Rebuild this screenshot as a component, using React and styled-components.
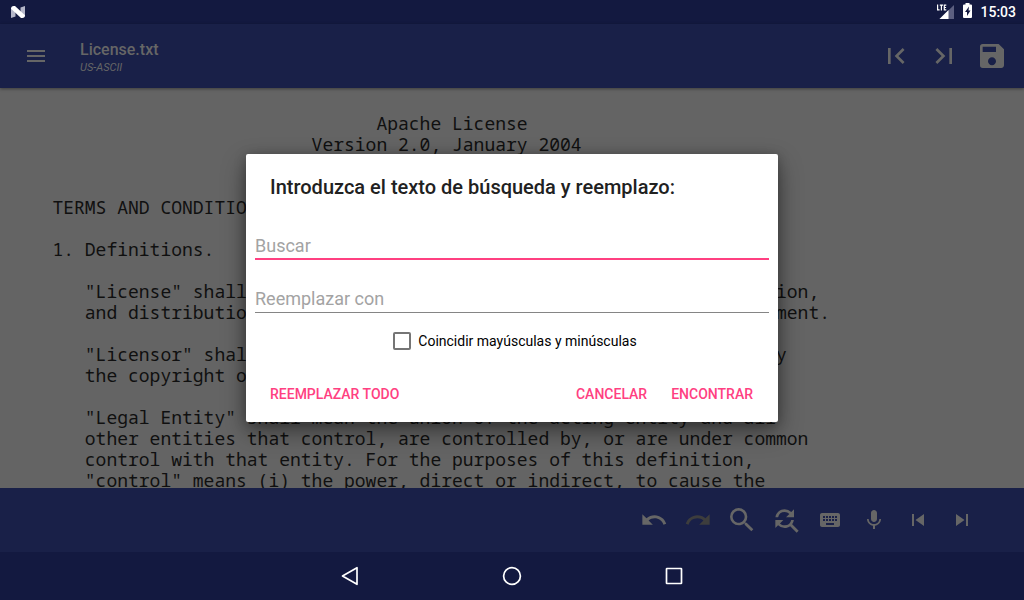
import React from 'react';
import styled, { createGlobalStyle } from 'styled-components';
import {
  MdMenu, MdFirstPage, MdLastPage, MdSave, MdUndo, MdRedo, MdSearch,
  MdFindReplace, MdKeyboard, MdMic, MdSkipPrevious, MdSkipNext,
} from 'react-icons/md';

const GlobalStyle = createGlobalStyle`
  * { box-sizing: border-box; }
  body { margin: 0; font-family: Roboto, "Liberation Sans", sans-serif; }
  button { font-family: inherit; border: 0; padding: 0; background: none; cursor: pointer; }
`;

const Screen = styled.div`
  display: flex;
  flex-direction: column;
  height: 100vh;
  overflow: hidden;
`;

const StatusBar = styled.header`
  display: flex;
  flex: none;
  align-items: center;
  justify-content: space-between;
  height: 24px;
  padding: 0 8px 0 10px;
  background: #131940;
  color: #fff;
  svg { display: block; }
`;

const StatusIcons = styled.div`
  display: flex;
  align-items: center;
  gap: 8px;
`;

const Clock = styled.time`
  font-size: 14px;
  font-weight: 500;
  line-height: 24px;
`;

const AppArea = styled.div`
  position: relative;
  display: flex;
  flex: 1;
  flex-direction: column;
  min-height: 0;
`;

const Toolbar = styled.div`
  display: flex;
  flex: none;
  align-items: center;
  height: 64px;
  padding: 0 8px 0 12px;
  background: #192048;
  box-shadow: 0 1px 3px rgba(0, 0, 0, 0.4);
  z-index: 1;
`;

const FileInfo = styled.div`
  flex: 1;
  padding: 3px 0 0 20px;
`;

const FileName = styled.h1`
  margin: 0;
  color: #666;
  font-size: 16px;
  font-weight: 500;
  line-height: 20px;
`;

const Encoding = styled.p`
  margin: 0;
  color: #666;
  font-size: 11px;
  font-style: italic;
  line-height: 16px;
`;

const IconButton = styled.button`
  display: flex;
  align-items: center;
  justify-content: center;
  width: ${(p) => p.$width || 48}px;
  height: 48px;
  color: ${(p) => (p.$dim ? '#3d3d3d' : '#666')};
`;

const Editor = styled.main`
  flex: 1;
  min-height: 0;
  overflow: hidden;
  padding: 25px 20px 0;
  background: #646464;
`;

const FileText = styled.pre`
  margin: 0;
  color: #101010;
  font-family: "Droid Sans Mono", "Noto Sans Mono", "DejaVu Sans Mono", monospace;
  font-size: 18px;
  line-height: 21px;
`;

const BottomBar = styled.div`
  display: flex;
  flex: none;
  align-items: center;
  justify-content: flex-end;
  height: 64px;
  padding-right: 40px;
  background: #192048;
`;

const NavBar = styled.nav`
  display: flex;
  flex: none;
  align-items: center;
  justify-content: center;
  gap: 114px;
  height: 48px;
  background: #131940;
`;

const NavButton = styled.button`
  width: 48px;
  height: 48px;
  svg { display: block; margin: auto; }
`;

const Overlay = styled.div`
  position: absolute;
  inset: 0;
  z-index: 2;
  display: flex;
  align-items: center;
  justify-content: center;
`;

const Dialog = styled.form`
  width: 532px;
  max-width: 90%;
  padding: 20px 9px 4px;
  border-radius: 2px;
  background: #fff;
  box-shadow: 0 10px 24px rgba(0, 0, 0, 0.4), 0 2px 12px rgba(0, 0, 0, 0.25);
`;

const Title = styled.h2`
  margin: 0 15px 28px;
  color: #212121;
  font-size: 20px;
  font-weight: 500;
  line-height: 26px;
`;

const Field = styled.input`
  display: block;
  width: 100%;
  height: 32px;
  margin-bottom: ${(p) => (p.$active ? 21 : 18)}px;
  padding: 4px 0 0;
  border: 0;
  border-bottom: ${(p) => (p.$active ? '2px solid #ff4081' : '1px solid #858585')};
  border-radius: 0;
  outline: none;
  background: none;
  color: #000;
  font-family: inherit;
  font-size: 18px;
  &::placeholder { color: #a3a3a3; opacity: 1; }
`;

const CheckRow = styled.label`
  display: flex;
  align-items: center;
  justify-content: center;
  gap: 7px;
  padding-left: 6px;
  color: #000;
  font-size: 14px;
  line-height: 20px;
`;

const Checkbox = styled.input`
  appearance: none;
  width: 18px;
  height: 18px;
  margin: 0;
  border: 2px solid #757575;
  border-radius: 2px;
  &:checked { background: #ff4081; border-color: #ff4081; }
`;

const Actions = styled.div`
  display: flex;
  gap: 8px;
  margin-top: 19px;
  padding: 0 8px 0 7px;
`;

const TextButton = styled.button`
  height: 48px;
  && { padding: 0 8px; }
  margin-right: ${(p) => (p.$lead ? 'auto' : 0)};
  color: #ff4081;
  font-size: 14px;
  font-weight: 500;
  text-transform: uppercase;
`;

const license = [
  '                                 Apache License',
  '                           Version 2.0, January 2004',
  '                        http://www.apache.org/licenses/',
  '',
  '   TERMS AND CONDITIONS FOR USE, REPRODUCTION, AND DISTRIBUTION',
  '',
  '   1. Definitions.',
  '',
  '      "License" shall mean the terms and conditions for use, reproduction,',
  '      and distribution as defined by Sections 1 through 9 of this document.',
  '',
  '      "Licensor" shall mean the copyright owner or entity authorized by',
  '      the copyright owner that is granting the License.',
  '',
  '      "Legal Entity" shall mean the union of the acting entity and all',
  '      other entities that control, are controlled by, or are under common',
  '      control with that entity. For the purposes of this definition,',
  '      "control" means (i) the power, direct or indirect, to cause the',
].join('\n');

const tools = [
  { label: 'Deshacer', Icon: MdUndo, size: 28 },
  { label: 'Rehacer', Icon: MdRedo, size: 28, dim: true },
  { label: 'Buscar', Icon: MdSearch, size: 32 },
  { label: 'Buscar y reemplazar', Icon: MdFindReplace, size: 32 },
  { label: 'Teclado', Icon: MdKeyboard, size: 24 },
  { label: 'Voz', Icon: MdMic, size: 24 },
  { label: 'Anterior', Icon: MdSkipPrevious, size: 24 },
  { label: 'Siguiente', Icon: MdSkipNext, size: 24 },
];

const fileTools = [
  { label: 'Inicio', Icon: MdFirstPage },
  { label: 'Final', Icon: MdLastPage },
  { label: 'Guardar', Icon: MdSave },
];

const NougatIcon = () => (
  <svg width="16" height="14" viewBox="0 0 16 14" aria-hidden="true">
    <path d="M1 2.5L5.5 7v4.5L1 13zM15 1v10.5L10.5 7V2.5z" fill="#b4b6c8" />
    <path d="M1 3.800Q1 1.200 3.800 1H5L15 10.200Q15 12.800 12.200 13H11z" fill="#fff" />
  </svg>
);

const SignalIcon = () => (
  <svg width="18" height="16" viewBox="0 0 18 16" aria-hidden="true">
    <path d="M18 1v14H3.500z" fill="#5c5f80" />
    <path d="M12.500 6V15H3.500z" fill="#fff" />
    <path d="M0 0h10.500v7.500H0z" fill="#131940" />
    <path d="M1.600 0.500v5.400h2M3.800 1.100h3.200M5.400 1.100V6.500M10.300 1.100H8.300V5.900h2M8.300 3.500h1.800" fill="none" stroke="#fff" strokeWidth="1.200" />
  </svg>
);

const BatteryIcon = () => (
  <svg width="10" height="18" viewBox="0 0 10 18" aria-hidden="true">
    <path d="M3.500 0h4v1.500h1.500q1 0 1 1v11.500q0 1-1 1h-7q-1 0-1-1V2.500q0-1 1-1h1.500z" fill="#fff" />
    <path d="M7 3.500L3 9H5V13L8.500 7.500H6.500z" fill="#131940" />
  </svg>
);

export default function App() {
  return (
    <Screen>
      <GlobalStyle />
      <StatusBar>
        <NougatIcon />
        <StatusIcons>
          <SignalIcon />
          <BatteryIcon />
          <Clock>15:03</Clock>
        </StatusIcons>
      </StatusBar>
      <AppArea>
        <Toolbar>
          <IconButton aria-label="Menú"><MdMenu size={24} /></IconButton>
          <FileInfo>
            <FileName>License.txt</FileName>
            <Encoding>US-ASCII</Encoding>
          </FileInfo>
          {fileTools.map(({ label, Icon }) => (
            <IconButton key={label} aria-label={label}><Icon size={32} /></IconButton>
          ))}
        </Toolbar>
        <Editor><FileText>{license}</FileText></Editor>
        <BottomBar>
          {tools.map(({ label, Icon, size, dim }) => (
            <IconButton key={label} aria-label={label} $width={44} $dim={dim}>
              <Icon size={size} />
            </IconButton>
          ))}
        </BottomBar>
        <Overlay>
          <Dialog role="dialog" aria-labelledby="dialog-title" onSubmit={(e) => e.preventDefault()}>
            <Title id="dialog-title">Introduzca el texto de búsqueda y reemplazo:</Title>
            <Field $active aria-label="Buscar" placeholder="Buscar" />
            <Field aria-label="Reemplazar con" placeholder="Reemplazar con" />
            <CheckRow>
              <Checkbox type="checkbox" />
              Coincidir mayúsculas y minúsculas
            </CheckRow>
            <Actions>
              <TextButton type="button" $lead>Reemplazar todo</TextButton>
              <TextButton type="button">Cancelar</TextButton>
              <TextButton type="submit">Encontrar</TextButton>
            </Actions>
          </Dialog>
        </Overlay>
      </AppArea>
      <NavBar>
        <NavButton aria-label="Atrás">
          <svg width="20" height="20" viewBox="0 0 20 20">
            <path d="M17 1.700v16.600L2.500 10z" fill="none" stroke="#fff" strokeWidth="1.700" strokeLinejoin="round" />
          </svg>
        </NavButton>
        <NavButton aria-label="Inicio">
          <svg width="20" height="20" viewBox="0 0 20 20">
            <circle cx="10" cy="10" r="8.400" fill="none" stroke="#fff" strokeWidth="1.700" />
          </svg>
        </NavButton>
        <NavButton aria-label="Recientes">
          <svg width="20" height="20" viewBox="0 0 20 20">
            <rect x="2.500" y="2.500" width="15" height="15" rx="0.500" fill="none" stroke="#fff" strokeWidth="1.700" />
          </svg>
        </NavButton>
      </NavBar>
    </Screen>
  );
}
